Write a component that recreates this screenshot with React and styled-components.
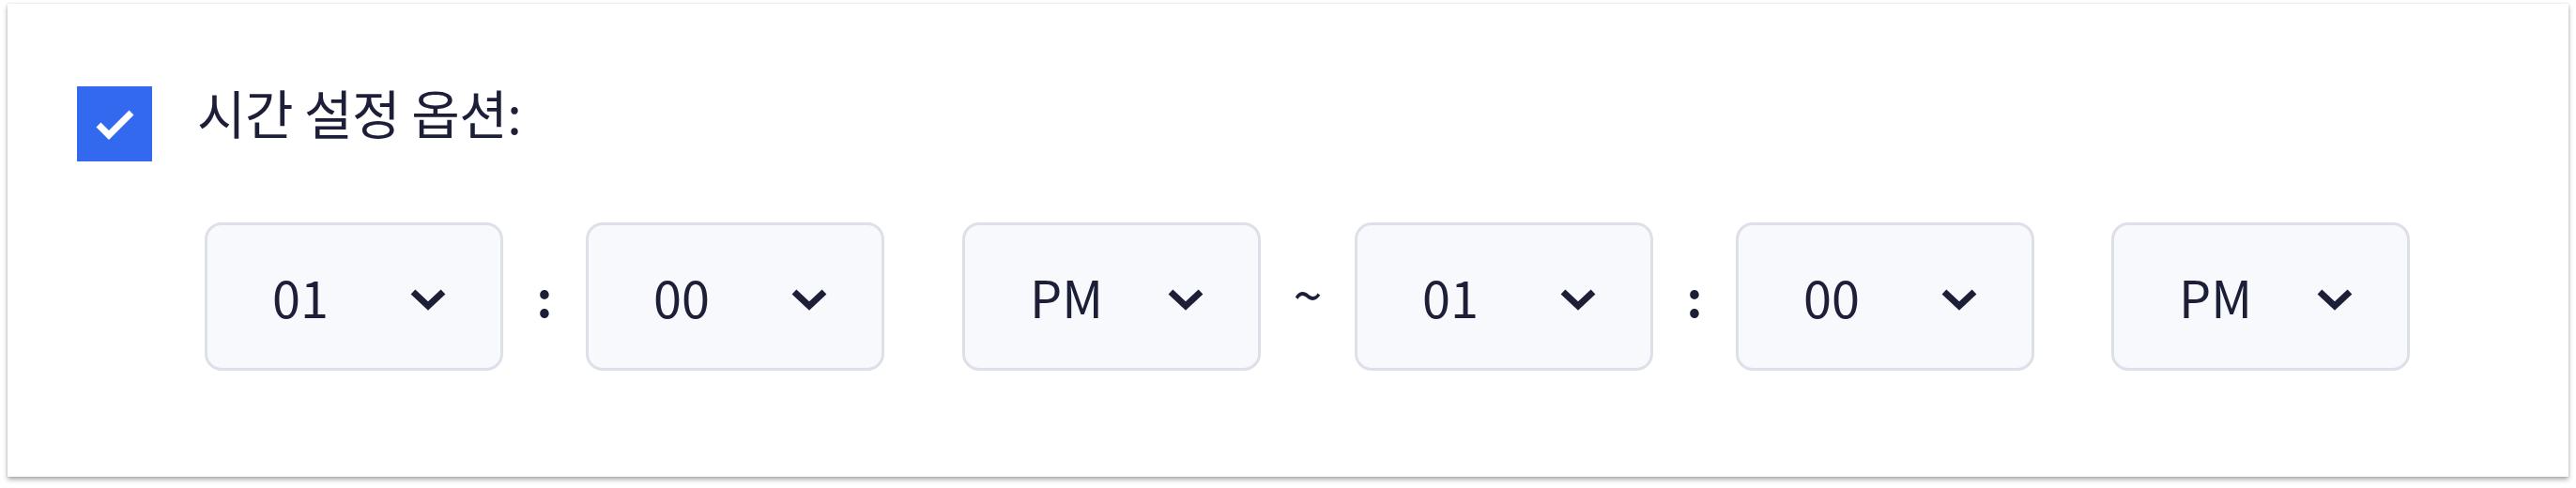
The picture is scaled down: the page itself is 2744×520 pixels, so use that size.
import React from "react";
import styled, { createGlobalStyle } from "styled-components";

const Global = createGlobalStyle`
  html, body { margin: 0; padding: 0; background: #ffffff; }
  body {
    font-family: "Noto Sans CJK KR", "Noto Sans", sans-serif;
    color: #1c1f37;
  }
`;

const Page = styled.div`
  padding: 4px 8px 12px;
`;

const Card = styled.section`
  box-sizing: border-box;
  height: 504px;
  background: #ffffff;
  box-shadow: 0 3px 5px rgba(0, 0, 0, 0.32), 0 0 2px rgba(0, 0, 0, 0.12);
  padding: 88px 74px 0;
`;

const OptionRow = styled.label`
  display: flex;
  align-items: flex-start;
  gap: 48px;
`;

const CheckBox = styled.span`
  width: 80px;
  height: 80px;
  flex: none;
  background: #3369ee;
  display: flex;
  align-items: center;
  justify-content: center;
`;

const LabelText = styled.span`
  font-size: 56px;
  line-height: 54px;
  color: #1c1f37;
  letter-spacing: -0.5px;
`;

const TimeRow = styled.div`
  display: flex;
  align-items: center;
  margin: 65px 0 0 136px;
`;

const Select = styled.div`
  box-sizing: border-box;
  width: 318px;
  height: 158px;
  flex: none;
  border: 3px solid #dde0e8;
  border-radius: 18px;
  background: #f8f9fd;
  display: flex;
  align-items: center;
  justify-content: space-between;
  padding: 0 57px 0 69px;
`;

const Value = styled.span`
  font-size: 54px;
  line-height: 1;
  color: #1c1f37;
`;

const Chevron = styled.svg`
  display: block;
  margin-top: 6px;
`;

const Sep = styled.span`
  width: ${(p) => p.$w}px;
  flex: none;
  text-align: center;
  font-size: ${(p) => p.$size || 52}px;
  font-weight: ${(p) => p.$weight || 400};
  line-height: 1;
  padding-bottom: ${(p) => p.$lift || 0}px;
  color: #1c1f37;
`;

function ChevronDown() {
  return (
    <Chevron width="40" height="24" viewBox="0 0 40 24" aria-hidden="true">
      <path
        d="M4 4 L20 19 L36 4"
        fill="none"
        stroke="#1c1f37"
        strokeWidth="7"
        strokeLinecap="butt"
        strokeLinejoin="miter"
      />
    </Chevron>
  );
}

function TimeSelect({ value }) {
  return (
    <Select>
      <Value>{value}</Value>
      <ChevronDown />
    </Select>
  );
}

export default function App() {
  return (
    <>
      <Global />
      <Page>
        <Card>
          <OptionRow>
            <CheckBox>
              <svg width="80" height="80" viewBox="0 0 80 80" aria-hidden="true">
                <path
                  d="M23 41 L34 52 L58 28"
                  fill="none"
                  stroke="#ffffff"
                  strokeWidth="7"
                  strokeLinecap="butt"
                  strokeLinejoin="miter"
                />
              </svg>
            </CheckBox>
            <LabelText>시간 설정 옵션:</LabelText>
          </OptionRow>
          <TimeRow>
            <TimeSelect value="01" />
            <Sep $w={88} $weight={700}>:</Sep>
            <TimeSelect value="00" />
            <Sep $w={83} />
            <TimeSelect value="PM" />
            <Sep $w={100} $size={56} $lift={8}>~</Sep>
            <TimeSelect value="01" />
            <Sep $w={88} $weight={700}>:</Sep>
            <TimeSelect value="00" />
            <Sep $w={82} />
            <TimeSelect value="PM" />
          </TimeRow>
        </Card>
      </Page>
    </>
  );
}
